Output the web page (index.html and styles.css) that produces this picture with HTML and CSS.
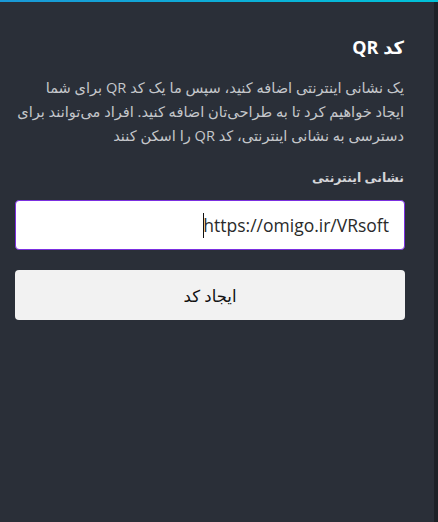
FILE: index.html
```html
<!DOCTYPE html>
<html lang="fa">
<head>
<meta charset="utf-8">
<title>کد QR</title>
<link rel="stylesheet" href="styles.css">
</head>
<body>
<div class="app">
  <section class="panel" dir="rtl">
    <h1 class="title">کد QR</h1>
    <p class="desc">یک نشانی اینترنتی اضافه کنید، سپس ما یک کد QR برای شما ایجاد خواهیم کرد تا به طراحی‌تان اضافه کنید. افراد می‌توانند برای دسترسی به نشانی اینترنتی، کد QR را اسکن کنند</p>
    <label class="label">نشانی اینترنتی</label>
    <div class="field" role="textbox"><span class="value" dir="ltr">https://omigo.ir/VRsoft</span><span class="caret"></span></div>
    <button class="btn">ایجاد کد</button>
  </section>
  <div class="edge"></div>
</div>
</body>
</html>
```
FILE: styles.css
```css
* { box-sizing: border-box; }
html, body { margin: 0; height: 100%; }
body {
  background: #2a2f38;
  font-family: "Open Sans", "DejaVu Sans", sans-serif;
}
.app {
  display: flex;
  flex-direction: row;
  direction: ltr;
  height: 100%;
  border-top: 2px solid #0fb0d8;
  border-image: linear-gradient(to right, #1a98d6, #00c2d8) 1;
  border-left: 0; border-right: 0; border-bottom: 0;
}
.panel {
  flex: 1;
  direction: rtl;
  background: #2a2f38;
  padding: 32px 29px 0 15px;
  display: flex;
  flex-direction: column;
}
.edge {
  width: 4px;
  background: #1d2127;
}
.title {
  margin: 0 1px 0 0;
  font-size: 18px;
  font-weight: 700;
  color: #ffffff;
  line-height: 26px;
}
.desc {
  margin: 15px 1px 0 0;
  font-size: 14.6px;
  line-height: 24px;
  color: #c5c7cb;
}
.label {
  margin: 21px 1px 0 0;
  font-size: 12.5px;
  font-weight: 700;
  color: #d4d5d8;
  line-height: 20px;
}
.field {
  margin-top: 12px;
  height: 50px;
  background: #fff;
  border: 1.5px solid #7b2fe0;
  border-radius: 4px;
  display: flex;
  align-items: center;
  justify-content: flex-start;
  padding: 0 15px;
}
.value {
  font-size: 17.5px;
  color: #2a2a2a;
}
.caret {
  width: 1px;
  height: 25px;
  margin-right: -1px;
  background: #111;
}
.btn {
  margin-top: 20px;
  height: 50px;
  background: #f2f2f2;
  border: 0;
  border-radius: 4px;
  font-family: "Open Sans", "DejaVu Sans", sans-serif;
  font-size: 16.5px;
  color: #111;
  cursor: pointer;
}
```
